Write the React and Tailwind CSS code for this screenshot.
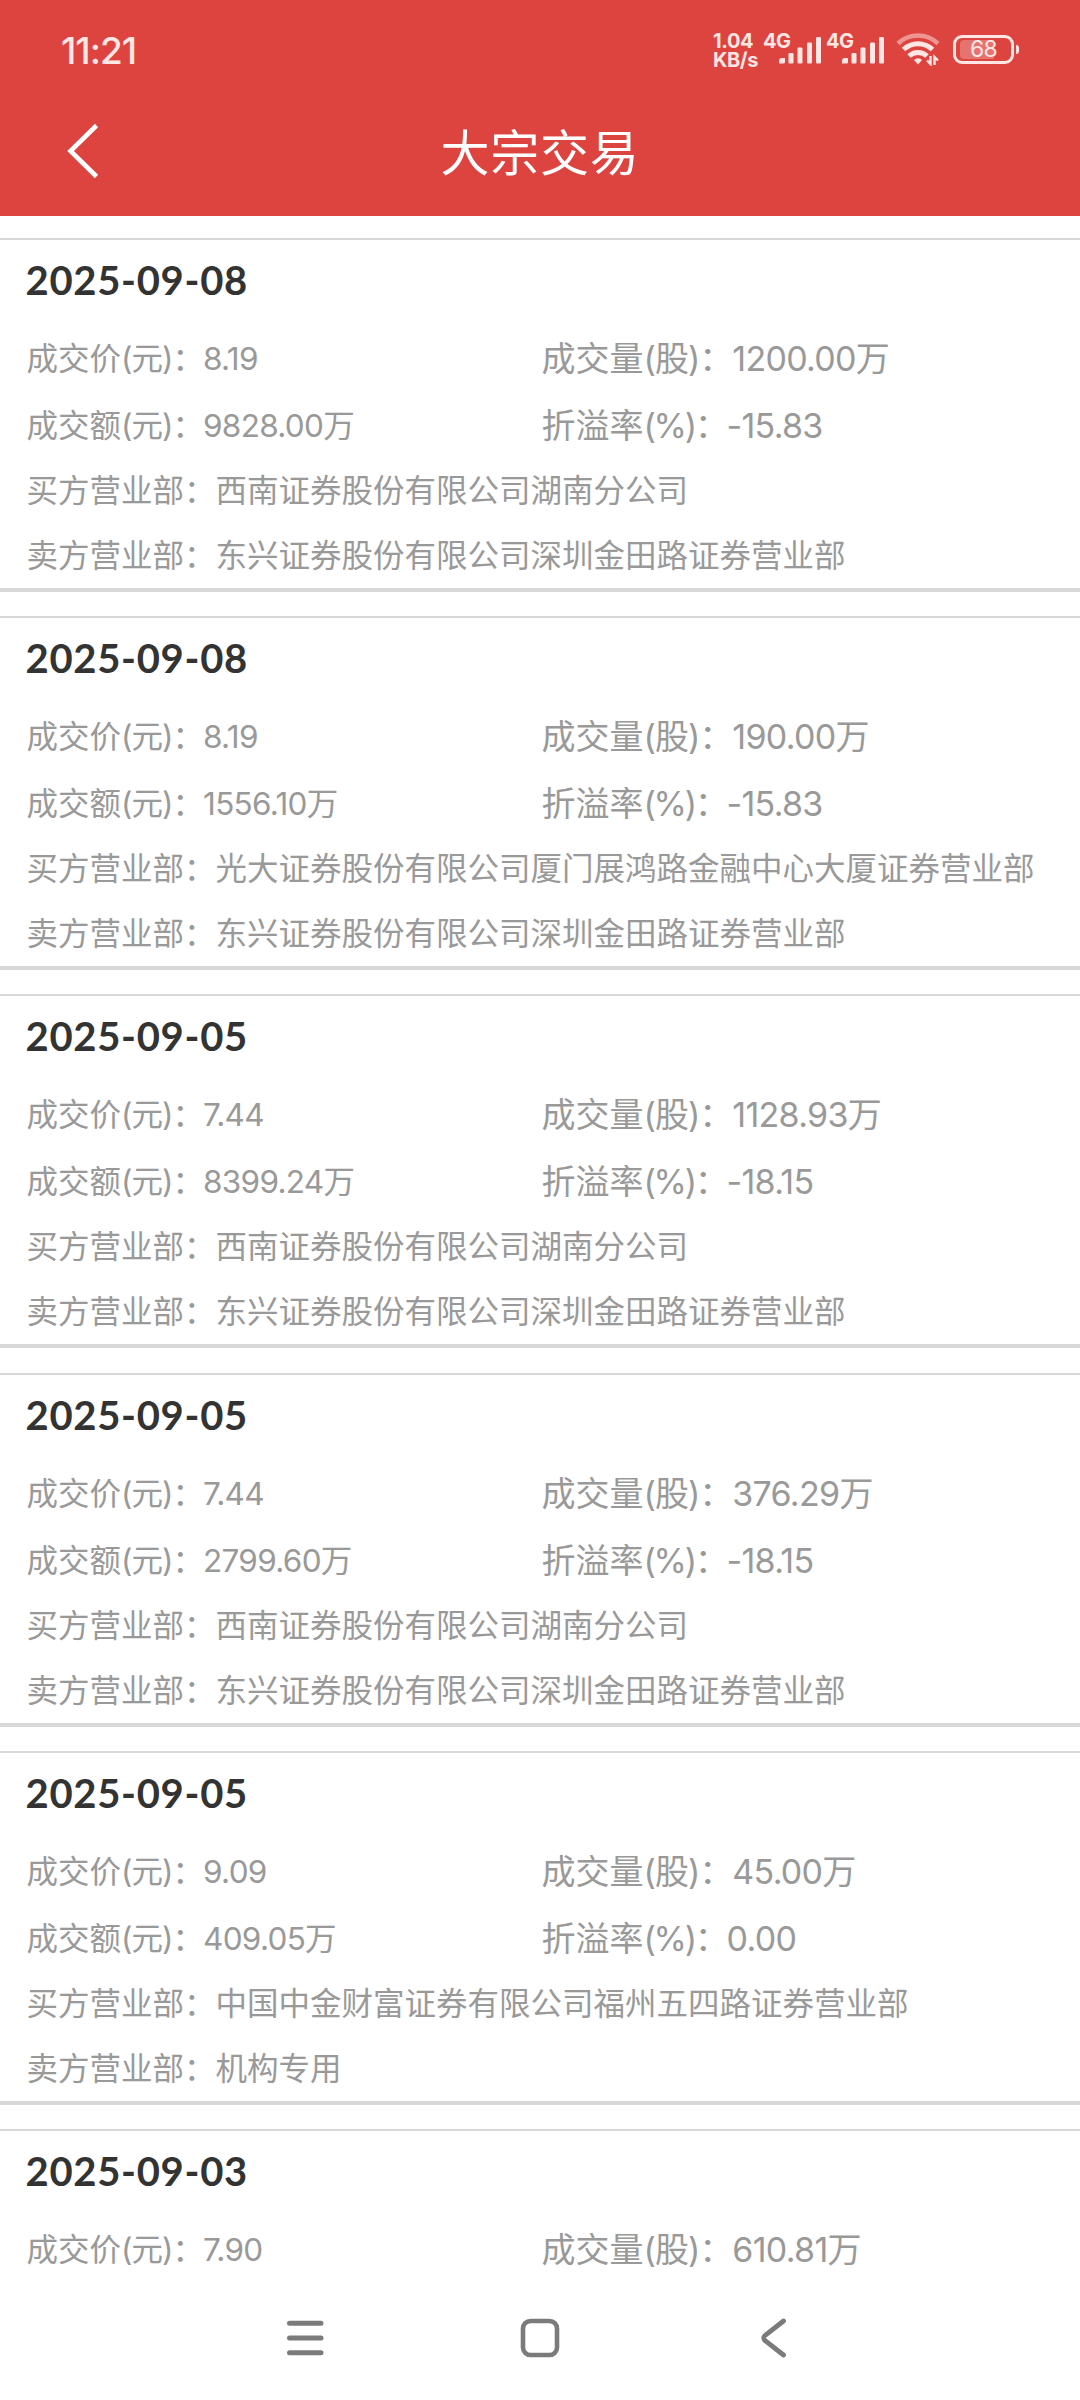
const trades = [
  {
    date: '2025-09-08',
    price: '8.19',
    volume: '1200.00万',
    amount: '9828.00万',
    premium: '-15.83',
    buyer: '西南证券股份有限公司湖南分公司',
    seller: '东兴证券股份有限公司深圳金田路证券营业部'
  },
  {
    date: '2025-09-08',
    price: '8.19',
    volume: '190.00万',
    amount: '1556.10万',
    premium: '-15.83',
    buyer: '光大证券股份有限公司厦门展鸿路金融中心大厦证券营业部',
    seller: '东兴证券股份有限公司深圳金田路证券营业部'
  },
  {
    date: '2025-09-05',
    price: '7.44',
    volume: '1128.93万',
    amount: '8399.24万',
    premium: '-18.15',
    buyer: '西南证券股份有限公司湖南分公司',
    seller: '东兴证券股份有限公司深圳金田路证券营业部'
  },
  {
    date: '2025-09-05',
    price: '7.44',
    volume: '376.29万',
    amount: '2799.60万',
    premium: '-18.15',
    buyer: '西南证券股份有限公司湖南分公司',
    seller: '东兴证券股份有限公司深圳金田路证券营业部'
  },
  {
    date: '2025-09-05',
    price: '9.09',
    volume: '45.00万',
    amount: '409.05万',
    premium: '0.00',
    buyer: '中国中金财富证券有限公司福州五四路证券营业部',
    seller: '机构专用'
  },
  {
    date: '2025-09-03',
    price: '7.90',
    volume: '610.81万'
  }
]

function Signal() {
  return (
    <div className="relative h-[34px] w-[57px]">
      <span className="absolute top-0 left-0 text-[20px] leading-[17px] font-bold tracking-[-0.6px]">4G</span>
      <svg className="absolute top-[3px] left-[16px]" width="43" height="28" viewBox="0 0 43 28" fill="currentColor">
        <path d="M0 27.5 v-2.5 a3 3 0 0 1 3-3 h3 v4 a1.5 1.5 0 0 1-1.5 1.5z" />
        <rect x="9.5" y="17" width="5" height="10.5" rx="1.2" />
        <rect x="18.5" y="11.5" width="5" height="16" rx="1.2" />
        <rect x="28" y="6.5" width="5" height="21" rx="1.2" />
        <rect x="37" y="1" width="5" height="26.5" rx="1.2" />
      </svg>
    </div>
  )
}

function Wifi() {
  return (
    <svg width="44" height="34" viewBox="0 0 44 34" fill="none" stroke="currentColor" strokeWidth="5">
      <path d="M2 11.5 A29 29 0 0 1 42 11.5" opacity="0.5" strokeWidth="4.5" />
      <path d="M7.5 17.5 A21 21 0 0 1 36.5 17.5" />
      <path d="M13 24 A13 13 0 0 1 31 24" />
      <path d="M18 28 a5.5 5.5 0 0 1 8 0 l-4 4.5z" fill="currentColor" stroke="none" />
      <path d="M34.5 24 v8 l-3.5-3.5 M38.5 33 v-8 l3.5 3.5" strokeWidth="2.4" />
    </svg>
  )
}

function StatusBar() {
  return (
    <div className="flex h-[86px] items-start justify-between pr-[61px] pl-[61px] text-[#ffe6e4]">
      <span className="mt-[31px] text-[37px] leading-[40px] font-medium tracking-[-1px]">11:21</span>
      <div className="flex items-start pt-[32px]">
        <div className="flex w-[50px] flex-col text-[20px] leading-[19px] font-bold tracking-[-0.4px]">
          <div>1.04</div>
          <div>KB/s</div>
        </div>
        <div className="mt-px flex gap-[6px]">
          <Signal />
          <Signal />
        </div>
        <div className="ml-[13px]">
          <Wifi />
        </div>
        <div className="mt-[3px] ml-[13px] flex items-center">
          <div className="relative flex h-[29px] w-[61px] items-center justify-center rounded-[9px] border-[3px] border-current">
            <div className="absolute top-[2px] left-[4px] h-[19px] w-[34px] rounded-l-[4px] bg-white/25" />
            <span className="relative text-[23px] leading-[23px] tracking-[-0.8px]">68</span>
          </div>
          <div className="ml-[2px] h-[9px] w-[3px] rounded-r-[3px] bg-current" />
        </div>
      </div>
    </div>
  )
}

function Header() {
  return (
    <header className="h-[216px] shrink-0 bg-[#dd443f] text-white">
      <StatusBar />
      <div className="flex h-[130px] items-center">
        <div className="w-[200px] pl-[66px]">
          <svg width="34" height="56" viewBox="0 0 34 56" fill="none" stroke="currentColor" strokeWidth="4.6">
            <path d="M30.5 2.5 L4.5 28 L30.5 53.5" />
          </svg>
        </div>
        <h1 className="flex-1 pt-[6px] text-center text-[49px] leading-[60px] tracking-[0.8px]">大宗交易</h1>
        <div className="w-[200px]" />
      </div>
    </header>
  )
}

function Field({ label, unit, value }) {
  return (
    <div className="whitespace-nowrap">
      {label}
      <span className={unit === '%' ? 'tracking-[-2.3px]' : 'tracking-[-1px]'}>({unit})：</span>
      <span className="tracking-[-0.7px]">{value}</span>
    </div>
  )
}

function TradeCard({ trade }) {
  return (
    <section className="mb-[24.2px] h-[354px] shrink-0 border-t-2 border-b-4 border-[#d8d8d8] pl-[26.5px] text-[31.5px] text-[#999999]">
      <h2 className="-ml-px mb-[5px] font-['Lato'] text-[40px] leading-[80px] font-bold tracking-[0.7px] text-[#333333]">{trade.date}</h2>
      <div className="grid grid-cols-[515px_1fr] leading-[67px]">
        <Field label="成交价" unit="元" value={trade.price} />
        <div className="text-[34px]">
          <Field label="成交量" unit="股" value={trade.volume} />
        </div>
        {trade.amount && (
          <>
            <Field label="成交额" unit="元" value={trade.amount} />
            <div className="text-[34px]">
              <Field label="折溢率" unit="%" value={trade.premium} />
            </div>
          </>
        )}
      </div>
      {trade.buyer && (
        <div className="-mt-px leading-[65px] whitespace-nowrap">
          <p>买方营业部：{trade.buyer}</p>
          <p>卖方营业部：{trade.seller}</p>
        </div>
      )}
    </section>
  )
}

function NavBar() {
  return (
    <nav className="flex h-[124px] shrink-0 justify-center gap-[190px] bg-white pt-[40px] text-[#7b7b7b]">
      <svg width="44" height="44" viewBox="0 0 44 44" fill="none" stroke="currentColor" strokeWidth="5" strokeLinecap="round">
        <path d="M5.5 7.3 H37 M5.5 22 H37 M5.5 36.7 H37" />
      </svg>
      <svg width="44" height="44" viewBox="0 0 44 44" fill="none" stroke="currentColor" strokeWidth="4.6">
        <rect x="5" y="5" width="34" height="34" rx="7.5" />
      </svg>
      <svg width="44" height="44" viewBox="0 0 44 44" fill="none" stroke="currentColor" strokeWidth="4.8" strokeLinecap="round">
        <path d="M31.5 5 L13.5 19 Q10 22 13.5 25 L31.5 39" />
      </svg>
    </nav>
  )
}

export default function App() {
  return (
    <div className="flex h-[2400px] w-[1080px] flex-col overflow-hidden bg-white font-['Inter','Noto_Sans_CJK_SC',sans-serif]">
      <Header />
      <main className="flex min-h-0 flex-1 flex-col overflow-hidden pt-[22px]">
        {trades.map((trade, i) => (
          <TradeCard key={i} trade={trade} />
        ))}
      </main>
      <NavBar />
    </div>
  )
}
